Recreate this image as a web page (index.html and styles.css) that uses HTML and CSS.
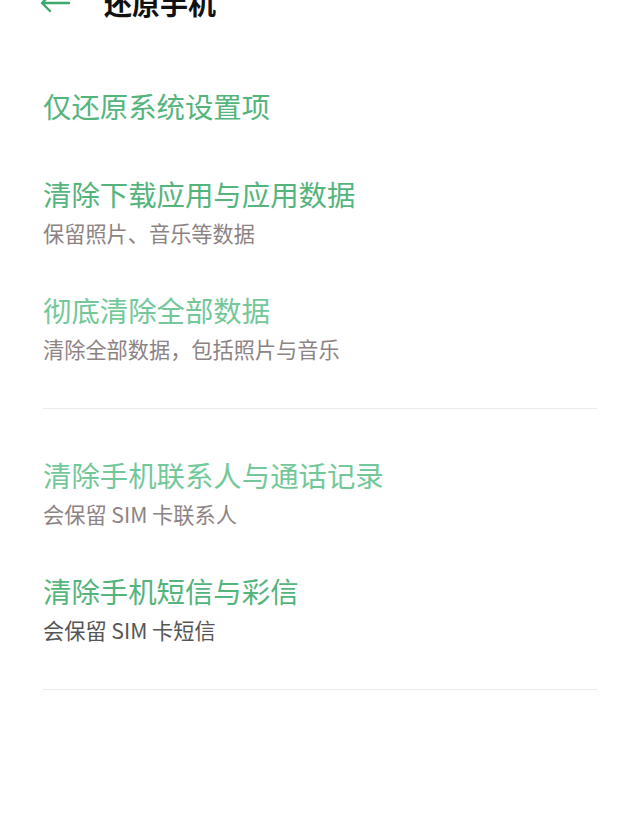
FILE: index.html
```html
<!DOCTYPE html>
<html lang="zh-CN">
<head>
<meta charset="utf-8">
<link rel="stylesheet" href="styles.css">
</head>
<body>
<div class="page">
  <header class="topbar">
    <svg class="back" width="32" height="20" viewBox="0 0 32 20"><path d="M30 10 H3 M11 2 L3 10 L11 18" fill="none" stroke="#3da86c" stroke-width="2.4" stroke-linecap="round" stroke-linejoin="round"/></svg>
    <h1 class="title">还原手机</h1>
  </header>
  <main class="content">
    <section class="group">
      <div class="item single"><div class="item-title">仅还原系统设置项</div></div>
      <div class="item"><div class="item-title">清除下载应用与应用数据</div><div class="item-sub">保留照片、音乐等数据</div></div>
      <div class="item"><div class="item-title light">彻底清除全部数据</div><div class="item-sub">清除全部数据，包括照片与音乐</div></div>
    </section>
    <hr class="divider">
    <section class="group">
      <div class="item"><div class="item-title light">清除手机联系人与通话记录</div><div class="item-sub">会保留 SIM 卡联系人</div></div>
      <div class="item"><div class="item-title">清除手机短信与彩信</div><div class="item-sub dark">会保留 SIM 卡短信</div></div>
    </section>
    <hr class="divider">
  </main>
</div>
</body>
</html>
```
FILE: styles.css
```css
html, body {
  margin: 0;
  padding: 0;
  background: #ffffff;
}
body {
  font-family: "Noto Sans CJK SC", "Noto Sans", sans-serif;
  overflow: hidden;
}
.page {
  width: 640px;
}
.topbar {
  display: flex;
  align-items: center;
  height: 46px;
  margin-top: -20px;
  padding-left: 39px;
}
.back {
  display: block;
  flex: none;
}
.title {
  margin: 0 0 0 33px;
  font-size: 28px;
  font-weight: 700;
  color: #111111;
  line-height: 46px;
}
.content {
  padding: 43px 43px 0 43px;
}
.group {
  display: flex;
  flex-direction: column;
}
.item {
  padding: 19px 0;
}
.item.single {
  padding: 18px 0 31px;
}
.item-title {
  font-size: 28.4px;
  line-height: 38px;
  color: #53b47c;
  font-weight: 400;
}
.item-title.light {
  color: #73c899;
}
.item-sub {
  font-size: 21.2px;
  line-height: 40px;
  color: #8d8383;
}
.item-sub.dark {
  color: #555555;
}
.divider {
  border: 0;
  height: 1px;
  background: #ebebeb;
  margin: 20px 0 28px;
}
```
